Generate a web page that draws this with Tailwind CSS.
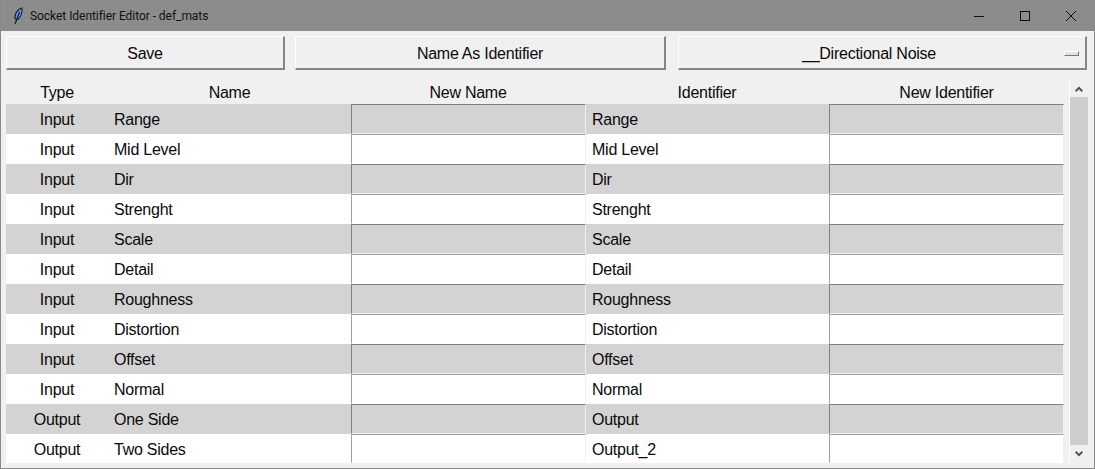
<!DOCTYPE html>
<html lang="en">

<head>
    <meta charset="UTF-8">
    <title>Socket Identifier Editor - def_mats</title>
    <script src="https://cdn.jsdelivr.net/npm/@tailwindcss/browser@4"></script>
</head>

<body class="h-[469px] w-[1095px] overflow-hidden bg-[#f0f0f0] font-['Liberation_Sans',sans-serif] text-[16px] tracking-[-0.25px] text-[#0a0a0a]">
    <div class="flex h-[469px] w-[1095px] flex-col border border-[#8a8a8a] border-t-0">

        <!-- title bar -->
        <div class="flex h-[31px] shrink-0 items-center bg-[#8c8c8c] pl-[12px]">
            <svg width="14" height="18" viewBox="0 0 14 18" class="shrink-0">
                <path d="M9 1 C5 2 2 6 1.8 10.5 L3.5 13 C6.8 12 9.6 7 9 1 Z" fill="#5f9be0" stroke="#0c1a33" stroke-width="1.1"/>
                <path d="M6.5 5 L2 17" stroke="#0c1a33" stroke-width="1.1" fill="none"/>
            </svg>
            <span class="ml-[3px] font-['Roboto',sans-serif] text-[12px] tracking-[-0.05px] text-[#111]">Socket Identifier Editor - def_mats</span>
            <div class="ml-auto flex h-full">
                <div class="flex w-[46px] items-center justify-center">
                    <svg width="10" height="10" viewBox="0 0 10 10"><path d="M0 5.5H10" stroke="#111" stroke-width="1"/></svg>
                </div>
                <div class="flex w-[46px] items-center justify-center">
                    <svg width="10" height="10" viewBox="0 0 10 10"><rect x="0.5" y="0.5" width="9" height="9" fill="none" stroke="#111" stroke-width="1"/></svg>
                </div>
                <div class="flex w-[46px] items-center justify-center">
                    <svg width="10" height="10" viewBox="0 0 10 10"><path d="M0 0L10 10M10 0L0 10" stroke="#111" stroke-width="1"/></svg>
                </div>
            </div>
        </div>

        <!-- toolbar -->
        <div class="mt-[5px] flex h-[34px] shrink-0 pl-[5px]">
            <button class="h-full w-[279px] border-t border-l border-r-2 border-b-2 border-t-white border-l-white border-r-[#868686] border-b-[#868686] bg-[#f0f0f0] pt-[2px]">Save</button>
            <button class="ml-[10px] h-full w-[371px] border-t border-l border-r-2 border-b-2 border-t-white border-l-white border-r-[#868686] border-b-[#868686] bg-[#f0f0f0] pt-[2px]">Name As Identifier</button>
            <div class="relative ml-[12px] flex h-full w-[409px] items-center justify-center border-t border-l border-r-2 border-b-2 border-t-white border-l-white border-r-[#868686] border-b-[#868686] bg-[#f0f0f0] pt-[2px] pr-[26px]">
                <span>__Directional Noise</span>
                <span class="absolute right-[6px] top-[14px] h-[5px] w-[15px] border border-t-white border-l-white border-r-[#777] border-b-[#777] bg-[#e4e4e4]"></span>
            </div>
        </div>

        <div class="mt-[10px] flex min-h-0 flex-1 pl-[5px]">
            <!-- table -->
            <div class="w-[1058px]">
                <div class="grid h-[24px] grid-cols-[102px_243px_234px_244px_235px] items-center pt-[1px] text-center">
                    <div>Type</div>
                    <div>Name</div>
                    <div>New Name</div>
                    <div>Identifier</div>
                    <div>New Identifier</div>
                </div>

                <div class="grid h-[30px] grid-cols-[102px_243px_234px_244px_235px] items-center bg-[#d3d3d3]">
                    <div class="pt-[2px] text-center">Input</div>
                    <div class="pt-[2px] pl-[6px]">Range</div>
                    <input class="h-[30px] w-[235px] border border-t-[#808080] border-l-[#808080] border-r-[#f0f0f0] border-b-[#f0f0f0] bg-[#d3d3d3]">
                    <div class="pt-[2px] pl-[7px]">Range</div>
                    <input class="h-[30px] w-[235px] border border-t-[#808080] border-l-[#808080] border-r-[#f0f0f0] border-b-[#f0f0f0] bg-[#d3d3d3]">
                </div>
                <div class="grid h-[30px] grid-cols-[102px_243px_234px_244px_235px] items-center bg-white">
                    <div class="pt-[2px] text-center">Input</div>
                    <div class="pt-[2px] pl-[6px]">Mid Level</div>
                    <input class="h-[30px] w-[235px] border border-t-[#a0a0a0] border-l-[#a0a0a0] border-r-[#f0f0f0] border-b-white bg-white">
                    <div class="pt-[2px] pl-[7px]">Mid Level</div>
                    <input class="h-[30px] w-[235px] border border-t-[#a0a0a0] border-l-[#a0a0a0] border-r-[#f0f0f0] border-b-white bg-white">
                </div>
                <div class="grid h-[30px] grid-cols-[102px_243px_234px_244px_235px] items-center bg-[#d3d3d3]">
                    <div class="pt-[2px] text-center">Input</div>
                    <div class="pt-[2px] pl-[6px]">Dir</div>
                    <input class="h-[30px] w-[235px] border border-t-[#808080] border-l-[#808080] border-r-[#f0f0f0] border-b-[#f0f0f0] bg-[#d3d3d3]">
                    <div class="pt-[2px] pl-[7px]">Dir</div>
                    <input class="h-[30px] w-[235px] border border-t-[#808080] border-l-[#808080] border-r-[#f0f0f0] border-b-[#f0f0f0] bg-[#d3d3d3]">
                </div>
                <div class="grid h-[30px] grid-cols-[102px_243px_234px_244px_235px] items-center bg-white">
                    <div class="pt-[2px] text-center">Input</div>
                    <div class="pt-[2px] pl-[6px]">Strenght</div>
                    <input class="h-[30px] w-[235px] border border-t-[#a0a0a0] border-l-[#a0a0a0] border-r-[#f0f0f0] border-b-white bg-white">
                    <div class="pt-[2px] pl-[7px]">Strenght</div>
                    <input class="h-[30px] w-[235px] border border-t-[#a0a0a0] border-l-[#a0a0a0] border-r-[#f0f0f0] border-b-white bg-white">
                </div>
                <div class="grid h-[30px] grid-cols-[102px_243px_234px_244px_235px] items-center bg-[#d3d3d3]">
                    <div class="pt-[2px] text-center">Input</div>
                    <div class="pt-[2px] pl-[6px]">Scale</div>
                    <input class="h-[30px] w-[235px] border border-t-[#808080] border-l-[#808080] border-r-[#f0f0f0] border-b-[#f0f0f0] bg-[#d3d3d3]">
                    <div class="pt-[2px] pl-[7px]">Scale</div>
                    <input class="h-[30px] w-[235px] border border-t-[#808080] border-l-[#808080] border-r-[#f0f0f0] border-b-[#f0f0f0] bg-[#d3d3d3]">
                </div>
                <div class="grid h-[30px] grid-cols-[102px_243px_234px_244px_235px] items-center bg-white">
                    <div class="pt-[2px] text-center">Input</div>
                    <div class="pt-[2px] pl-[6px]">Detail</div>
                    <input class="h-[30px] w-[235px] border border-t-[#a0a0a0] border-l-[#a0a0a0] border-r-[#f0f0f0] border-b-white bg-white">
                    <div class="pt-[2px] pl-[7px]">Detail</div>
                    <input class="h-[30px] w-[235px] border border-t-[#a0a0a0] border-l-[#a0a0a0] border-r-[#f0f0f0] border-b-white bg-white">
                </div>
                <div class="grid h-[30px] grid-cols-[102px_243px_234px_244px_235px] items-center bg-[#d3d3d3]">
                    <div class="pt-[2px] text-center">Input</div>
                    <div class="pt-[2px] pl-[6px]">Roughness</div>
                    <input class="h-[30px] w-[235px] border border-t-[#808080] border-l-[#808080] border-r-[#f0f0f0] border-b-[#f0f0f0] bg-[#d3d3d3]">
                    <div class="pt-[2px] pl-[7px]">Roughness</div>
                    <input class="h-[30px] w-[235px] border border-t-[#808080] border-l-[#808080] border-r-[#f0f0f0] border-b-[#f0f0f0] bg-[#d3d3d3]">
                </div>
                <div class="grid h-[30px] grid-cols-[102px_243px_234px_244px_235px] items-center bg-white">
                    <div class="pt-[2px] text-center">Input</div>
                    <div class="pt-[2px] pl-[6px]">Distortion</div>
                    <input class="h-[30px] w-[235px] border border-t-[#a0a0a0] border-l-[#a0a0a0] border-r-[#f0f0f0] border-b-white bg-white">
                    <div class="pt-[2px] pl-[7px]">Distortion</div>
                    <input class="h-[30px] w-[235px] border border-t-[#a0a0a0] border-l-[#a0a0a0] border-r-[#f0f0f0] border-b-white bg-white">
                </div>
                <div class="grid h-[30px] grid-cols-[102px_243px_234px_244px_235px] items-center bg-[#d3d3d3]">
                    <div class="pt-[2px] text-center">Input</div>
                    <div class="pt-[2px] pl-[6px]">Offset</div>
                    <input class="h-[30px] w-[235px] border border-t-[#808080] border-l-[#808080] border-r-[#f0f0f0] border-b-[#f0f0f0] bg-[#d3d3d3]">
                    <div class="pt-[2px] pl-[7px]">Offset</div>
                    <input class="h-[30px] w-[235px] border border-t-[#808080] border-l-[#808080] border-r-[#f0f0f0] border-b-[#f0f0f0] bg-[#d3d3d3]">
                </div>
                <div class="grid h-[30px] grid-cols-[102px_243px_234px_244px_235px] items-center bg-white">
                    <div class="pt-[2px] text-center">Input</div>
                    <div class="pt-[2px] pl-[6px]">Normal</div>
                    <input class="h-[30px] w-[235px] border border-t-[#a0a0a0] border-l-[#a0a0a0] border-r-[#f0f0f0] border-b-white bg-white">
                    <div class="pt-[2px] pl-[7px]">Normal</div>
                    <input class="h-[30px] w-[235px] border border-t-[#a0a0a0] border-l-[#a0a0a0] border-r-[#f0f0f0] border-b-white bg-white">
                </div>
                <div class="grid h-[30px] grid-cols-[102px_243px_234px_244px_235px] items-center bg-[#d3d3d3]">
                    <div class="pt-[2px] text-center">Output</div>
                    <div class="pt-[2px] pl-[6px]">One Side</div>
                    <input class="h-[30px] w-[235px] border border-t-[#808080] border-l-[#808080] border-r-[#f0f0f0] border-b-[#f0f0f0] bg-[#d3d3d3]">
                    <div class="pt-[2px] pl-[7px]">Output</div>
                    <input class="h-[30px] w-[235px] border border-t-[#808080] border-l-[#808080] border-r-[#f0f0f0] border-b-[#f0f0f0] bg-[#d3d3d3]">
                </div>
                <div class="grid h-[29px] grid-cols-[102px_243px_234px_244px_235px] items-center bg-white">
                    <div class="pt-[2px] text-center">Output</div>
                    <div class="pt-[2px] pl-[6px]">Two Sides</div>
                    <input class="h-[29px] w-[235px] border border-t-[#a0a0a0] border-l-[#a0a0a0] border-r-[#f0f0f0] border-b-white bg-white">
                    <div class="pt-[2px] pl-[7px]">Output_2</div>
                    <input class="h-[29px] w-[235px] border border-t-[#a0a0a0] border-l-[#a0a0a0] border-r-[#f0f0f0] border-b-white bg-white">
                </div>
            </div>

            <!-- scrollbar -->
            <div class="ml-[5px] flex h-[383px] w-[19px] flex-col border-l border-l-white bg-[#f0f0f0]">
                <div class="flex h-[17px] items-center justify-center">
                    <svg width="8" height="6" viewBox="0 0 8 6"><path d="M0.6 5.2L4 1.8L7.4 5.2" fill="none" stroke="#505050" stroke-width="2"/></svg>
                </div>
                <div class="h-[348px] bg-[#cdcdcd]"></div>
                <div class="flex h-[18px] items-center justify-center">
                    <svg width="8" height="6" viewBox="0 0 8 6"><path d="M0.6 0.8L4 4.2L7.4 0.8" fill="none" stroke="#505050" stroke-width="2"/></svg>
                </div>
            </div>
        </div>
    </div>
</body>

</html>
